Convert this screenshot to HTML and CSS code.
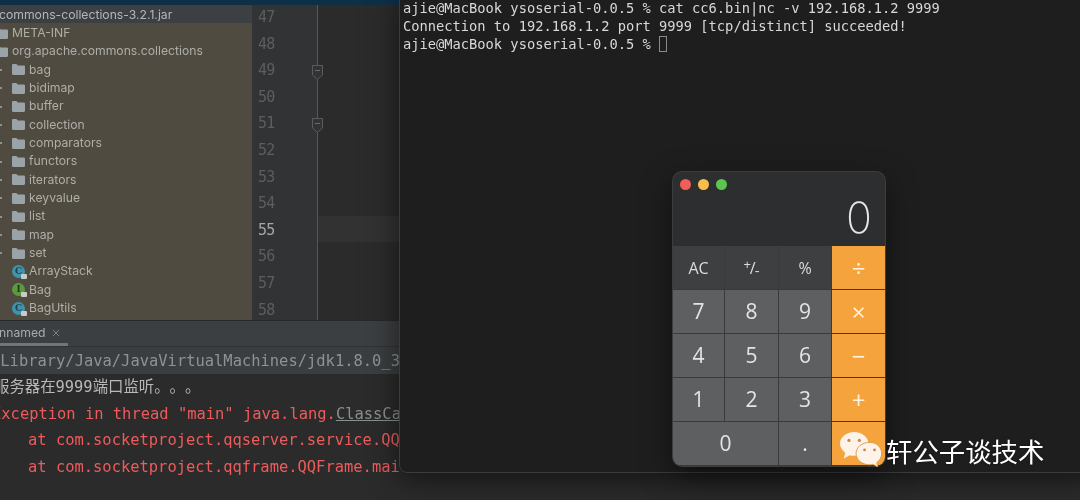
FILE: index.html
```html
<!DOCTYPE html>
<html lang="en">
<head>
<meta charset="utf-8">
<title>IDE, terminal and calculator</title>
<link rel="stylesheet" href="styles.css">
</head>
<body>
<svg class="defs" width="0" height="0" aria-hidden="true">
  <symbol id="folder" viewBox="0 0 13 11"><path d="M0 1.2C0 .5.5 0 1.2 0h3.2l1.4 1.6h6c.7 0 1.2.5 1.2 1.2v7c0 .7-.5 1.2-1.2 1.2H1.2C.5 11 0 10.500 0 9.800z" fill="#9aa3a8"/></symbol>
  <symbol id="fold" viewBox="0 0 11 15"><path d="M.5.500h10v9.500l-5 4.500-5-4.500z" fill="#313335" stroke="#5a5d5f"/><path d="M3 5.500h5" stroke="#6a6d6f"/></symbol>
</svg>
<div class="desktop">
  <div class="ide">
    <div class="top-strip"></div>
    <div class="ide-main">
      <div class="tree">
        <div class="jar-row"><span class="clip">commons-collections-3.2.1.jar</span></div>
        <div class="row lvl1"><svg class="ico"><use href="#folder"/></svg>META-INF</div>
        <div class="row lvl1"><svg class="ico"><use href="#folder"/></svg>org.apache.commons.collections</div>
        <div class="row lvl2"><i class="dot"></i><svg class="ico"><use href="#folder"/></svg>bag</div>
        <div class="row lvl2"><i class="dot"></i><svg class="ico"><use href="#folder"/></svg>bidimap</div>
        <div class="row lvl2"><i class="dot"></i><svg class="ico"><use href="#folder"/></svg>buffer</div>
        <div class="row lvl2"><i class="dot"></i><svg class="ico"><use href="#folder"/></svg>collection</div>
        <div class="row lvl2"><i class="dot"></i><svg class="ico"><use href="#folder"/></svg>comparators</div>
        <div class="row lvl2"><i class="dot"></i><svg class="ico"><use href="#folder"/></svg>functors</div>
        <div class="row lvl2"><i class="dot"></i><svg class="ico"><use href="#folder"/></svg>iterators</div>
        <div class="row lvl2"><i class="dot"></i><svg class="ico"><use href="#folder"/></svg>keyvalue</div>
        <div class="row lvl2"><i class="dot"></i><svg class="ico"><use href="#folder"/></svg>list</div>
        <div class="row lvl2"><i class="dot"></i><svg class="ico"><use href="#folder"/></svg>map</div>
        <div class="row lvl2"><i class="dot"></i><svg class="ico"><use href="#folder"/></svg>set</div>
        <div class="row lvl3"><span class="badge cls">C<i class="lock"></i></span>ArrayStack</div>
        <div class="row lvl3"><span class="badge ifc">I<i class="lock"></i></span>Bag</div>
        <div class="row lvl3"><span class="badge cls">C<i class="lock"></i></span>BagUtils</div>
        <div class="row lvl3"><span class="badge cls"></span></div>
      </div>
      <div class="code">
        <div class="line"><span class="num">47</span><span class="fold"></span><span class="text"></span></div>
        <div class="line"><span class="num">48</span><span class="fold"></span><span class="text"></span></div>
        <div class="line"><span class="num">49</span><span class="fold"><svg class="fold-ico"><use href="#fold"/></svg></span><span class="text"></span></div>
        <div class="line"><span class="num">50</span><span class="fold"></span><span class="text"></span></div>
        <div class="line"><span class="num">51</span><span class="fold"><svg class="fold-ico"><use href="#fold"/></svg></span><span class="text"></span></div>
        <div class="line"><span class="num">52</span><span class="fold"></span><span class="text"></span></div>
        <div class="line"><span class="num">53</span><span class="fold"></span><span class="text"></span></div>
        <div class="line"><span class="num">54</span><span class="fold"></span><span class="text"></span></div>
        <div class="line current"><span class="num">55</span><span class="fold"></span><span class="text"></span></div>
        <div class="line"><span class="num">56</span><span class="fold"></span><span class="text"></span></div>
        <div class="line"><span class="num">57</span><span class="fold"></span><span class="text"></span></div>
        <div class="line"><span class="num">58</span><span class="fold"></span><span class="text"></span></div>
      </div>
    </div>
    <div class="run-tabs"><div class="run-tab"><span class="tab-name">nnamed</span><svg class="close" viewBox="0 0 8 8"><path d="M1 1l6 6M7 1L1 7" stroke="#7d8083" fill="none"/></svg></div></div>
    <div class="console">
      <div class="cmd"><span class="cmd-text">/Library/Java/JavaVirtualMachines/jdk1.8.0_3</span></div>
      <div class="out cn">服务器在9999端口监听。。。</div>
      <div class="out err"><span class="err-head">Exception in thread "main" java.lang.<u>ClassCa</u></span></div>
      <div class="out err tr">at com.socketproject.qqserver.service.QQ</div>
      <div class="out err tr">at com.socketproject.qqframe.QQFrame.mai</div>
    </div>
  </div>

  <div class="terminal">
    <div class="term-line">ajie@MacBook ysoserial-0.0.5 % cat cc6.bin|nc -v 192.168.1.2 9999</div>
    <div class="term-line">Connection to 192.168.1.2 port 9999 [tcp/distinct] succeeded!</div>
    <div class="term-line">ajie@MacBook ysoserial-0.0.5 % <span class="cursor"></span></div>
  </div>

  <div class="calc">
    <div class="calc-head">
      <div class="lights"><i class="light red"></i><i class="light yellow"></i><i class="light green"></i></div>
      <div class="display">0</div>
    </div>
    <div class="keys">
      <div class="key fn">AC</div><div class="key fn"><span class="plus">+</span>/<span class="minus">-</span></div><div class="key fn">%</div><div class="key op">÷</div>
      <div class="key">7</div><div class="key">8</div><div class="key">9</div><div class="key op">×</div>
      <div class="key">4</div><div class="key">5</div><div class="key">6</div><div class="key op">−</div>
      <div class="key">1</div><div class="key">2</div><div class="key">3</div><div class="key op">+</div>
      <div class="key wide">0</div><div class="key">.</div><div class="key op"></div>
    </div>
  </div>

  <div class="mark">
    <svg class="wechat" viewBox="0 0 48 38">
      <path d="M16 1C7.700 1 1 6.500 1 13.300c0 3.900 2.200 7.300 5.600 9.600L5 29l6.300-3.400c1.500.4 3.100.6 4.700.6 8.300 0 15-5.500 15-12.900C31 6.500 24.300 1 16 1z" fill="#fdf3e8"/>
      <circle cx="10.500" cy="10" r="1.700" fill="#c98a45"/><circle cx="21.500" cy="10" r="1.700" fill="#c98a45"/>
      <path d="M32 12c-7.700 0-14 5.100-14 11.800S24.300 35.600 32 35.600c1.400 0 2.800-.2 4-.5l5 2.900-1.100-4.800c3.300-2.200 5.100-5.700 5.100-9.400C45 17.100 39.700 12 32 12z" fill="#fdf3e8" stroke="#e09a48" stroke-width="1"/>
      <circle cx="27" cy="20" r="1.500" fill="#c98a45"/><circle cx="37.500" cy="20" r="1.500" fill="#c98a45"/>
    </svg>
    <span class="mark-text">轩公子谈技术</span>
  </div>
</div>
</body>
</html>
```
FILE: styles.css
```css
* { box-sizing: border-box; }
html, body { margin: 0; padding: 0; background: #1c1c1c; }
body { width: 1080px; height: 500px; overflow: hidden; }
.defs { position: absolute; }
.desktop { position: relative; width: 1080px; height: 500px; overflow: hidden; filter: blur(.35px); }

/* IDE */
.ide { display: flex; flex-direction: column; width: 1080px; height: 500px; background: #2b2b2b; }
.top-strip { height: 5px; background: #0e3047; }
.ide-main { display: flex; height: 316px; border-bottom: 1px solid #27282a; }
.tree { width: 252px; overflow: hidden; background: #4f4b40; color: #aeaea8; font: 12.2px/18.35px "Inter", sans-serif; }
.jar-row { height: 18px; margin-bottom: 1px; background: #3c4043; color: #b4b7b8; line-height: 20px; white-space: nowrap; }
.clip { display: block; margin-left: -1px; }
.row { display: flex; align-items: center; height: 18.35px; white-space: nowrap; }
.lvl1 { margin-left: -5px; }
.lvl2, .lvl3 { padding-left: 12px; position: relative; }
.ico { width: 13px; height: 11px; margin-right: 4px; flex: none; }
.dot { position: absolute; left: 0; width: 2px; height: 2px; border-radius: 50%; background: #aaa; }
.badge { position: relative; flex: none; width: 13px; height: 13px; margin-right: 4px; border-radius: 50%; color: #26404a; font: 700 9px/13px "DejaVu Serif", serif; text-align: center; letter-spacing: 0; }
.cls { background: #3f93ad; }
.ifc { background: #5b9a3f; color: #21391a; }
.lock { position: absolute; right: -2px; bottom: -1px; width: 6px; height: 5px; background: #c9c9c5; border-radius: 1px; }

.code { flex: 1; overflow: hidden; background: #2b2b2b; }
.line { display: flex; height: 26.6px; }
.line:first-child { margin-top: -2px; }
.num { width: 65px; flex: none; padding: 1px 0 0 6px; background: #313335; color: #5b5f61; font: 15px/26.6px "DejaVu Sans Mono", monospace; letter-spacing: -.8px; }
.fold { position: relative; width: 1px; flex: none; background: #55585a; }
.fold-ico { position: absolute; left: -5px; top: 9px; width: 11px; height: 15px; }
.text { flex: 1; background: linear-gradient(#272727, #272727) no-repeat 40px 0 / 1px 100%; }
.current .num { color: #a6a6a6; }
.current .text { background: #323232; }

.run-tabs { height: 26px; background: #3c3f41; border-bottom: 1px solid #323232; overflow: hidden; }
.run-tab { display: flex; align-items: flex-start; width: 68px; height: 25px; padding-top: 2px; border-bottom: 3px solid #6e757b; color: #a9abac; font: 12.2px/20px "Inter", sans-serif; white-space: nowrap; }
.tab-name { margin-left: -1px; }
.close { width: 8px; height: 8px; margin: 6px 0 0 6px; }
.console { flex: 1; font: 15.45px/26.6px "DejaVu Sans Mono", monospace; white-space: nowrap; overflow: hidden; }
.cmd { height: 27px; background: #3b3e40; color: #8f9293; line-height: 28px; }
.cmd-text { display: block; margin-left: -9px; }
.out { height: 26.6px; }
.cn { color: #b8b8b8; margin-left: -6px; font-family: "DejaVu Sans Mono", "Noto Sans CJK SC", monospace; font-size: 15.4px; text-spacing-trim: space-all; }
.err { color: #ef5b5b; }
.err-head { display: block; margin-left: -8px; }
.err u { color: #8a8f91; }
.tr { padding-left: 28px; }

/* Terminal */
.terminal { position: absolute; left: 399px; top: -8px; width: 700px; height: 481px; padding: 6px 0 0 3px; background: #1e1e1e; border: 1px solid #3c3c3c; border-radius: 8px; box-shadow: 0 6px 30px rgba(0,0,0,.55); color: #d8d8d8; font: 13.72px/18px "DejaVu Sans Mono", monospace; }
.term-line { height: 18px; white-space: pre; }
.cursor { display: inline-block; width: 8px; height: 16px; vertical-align: -3px; border: 1px solid #8a8a8a; }

/* Calculator */
.calc { position: absolute; left: 673px; top: 172px; width: 212px; height: 294px; display: flex; flex-direction: column; overflow: hidden; border-radius: 9px; background: #2d2e30; box-shadow: 0 0 0 1px #3c3d3f, 0 10px 30px rgba(0,0,0,.5); }
.calc-head { height: 74px; flex: none; position: relative; }
.lights { display: flex; gap: 7px; padding: 7px 0 0 7px; }
.light { width: 11px; height: 11px; border-radius: 50%; }
.red { background: #ee5f58; }
.yellow { background: #f6bd4f; }
.green { background: #5ec450; }
.display { position: absolute; right: 13px; top: 20px; color: #e6e6e6; font: 200 43px/50px "Inter", "Open Sans", sans-serif; }
.keys { flex: 1; display: grid; grid-template-columns: 51px 53px 52px 53px; grid-auto-rows: 43px; gap: 1px; background: #3a3a3a; }
.key { display: flex; align-items: center; justify-content: center; background: #5e5f61; color: #e4e4e4; font: 21px/1 "Open Sans", sans-serif; }
.fn { background: #3e3f41; color: #dcdcdc; font-size: 16px; }
.plus { font-size: 13px; transform: translate(1px, -3px); }
.minus { font-size: 15px; transform: translate(-1px, 3px); }
.op { background: #f5a33c; color: #fff3e2; font-size: 24px; }
.wide { grid-column: span 2; }

/* Watermark */
.mark { position: absolute; left: 839px; top: 432px; display: flex; align-items: flex-start; height: 38px; }
.wechat { width: 45.500px; height: 36px; margin: -1px 2.500px 0 0; flex: none; }
.mark-text { margin-left: -1px; color: #fff; font: 26.400px/38px "Noto Sans CJK SC", sans-serif; text-shadow: 0 0 2px rgba(0,0,0,.5); white-space: nowrap; }
```
